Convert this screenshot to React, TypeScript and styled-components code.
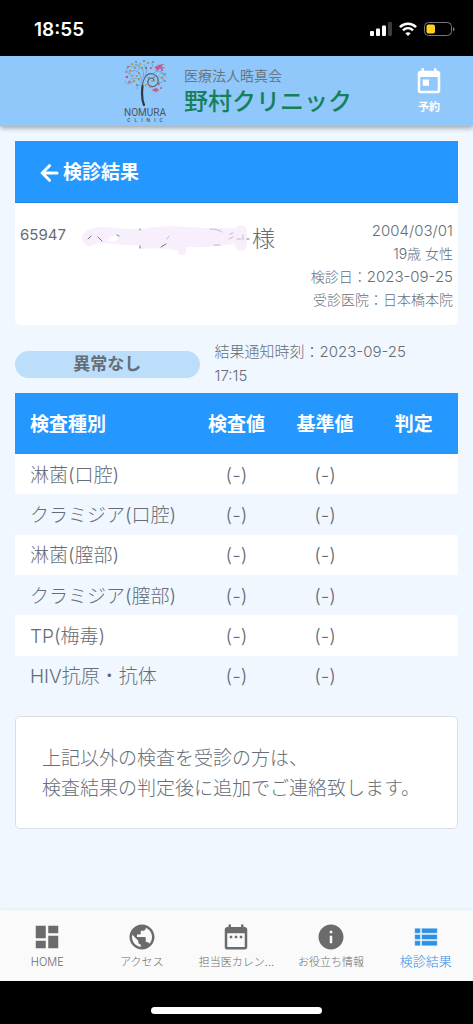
import React from "react";
import styled, { createGlobalStyle } from "styled-components";
import { MdDashboard, MdDateRange, MdInfo, MdPublic, MdToday } from "react-icons/md";

const GlobalStyle = createGlobalStyle`
  *, *::before, *::after { box-sizing: border-box; }
  body {
    margin: 0;
    background: #000;
    color: #656d76;
    font-family: Inter, "Noto Sans CJK JP", sans-serif;
    font-weight: 300;
  }
  h1, p { margin: 0; }
`;

const Screen = styled.div`
  display: flex;
  flex-direction: column;
  min-height: 100vh;
`;

const StatusBar = styled.div`
  display: flex;
  align-items: center;
  justify-content: space-between;
  height: 56px;
  padding: 2px 18px 0 34px;
  background: #000;
  color: #fff;
  font-size: 19px;
  font-weight: 600;
`;

const StatusIcons = styled.div`
  display: flex;
  align-items: center;
  gap: 7px;
`;

const Header = styled.header`
  position: relative;
  display: grid;
  grid-template-columns: 1fr auto 1fr;
  height: 70px;
  background: #90c8fb;
  box-shadow: 0 2px 5px rgba(0, 0, 0, 0.35);
`;

const Brand = styled.a`
  grid-column: 2;
  display: flex;
  gap: 18px;
  padding-left: 3px;
  color: inherit;
  text-decoration: none;
`;

const Emblem = styled.div`
  display: flex;
  flex-direction: column;
  align-items: center;
  width: 42px;
  padding-top: 3px;
  color: #4b5563;
`;

const EmblemName = styled.span`
  margin-top: 2px;
  font-family: Roboto, sans-serif;
  font-size: 10px;
  font-weight: 400;
  line-height: 9px;
`;

const EmblemKind = styled.span`
  font-family: Roboto, sans-serif;
  font-size: 5px;
  font-weight: 500;
  line-height: 7px;
  letter-spacing: 4px;
  padding-left: 4px;
`;

const BrandText = styled.div`
  display: flex;
  flex-direction: column;
  padding-top: 10px;
`;

const Corporation = styled.span`
  color: #6a7683;
  font-size: 14px;
  font-weight: 400;
  line-height: 20px;
`;

const ClinicName = styled.span`
  color: #16805a;
  font-size: 24px;
  font-weight: 500;
  line-height: 32px;
`;

const ReserveButton = styled.button`
  grid-column: 3;
  justify-self: end;
  display: flex;
  flex-direction: column;
  align-items: center;
  margin-right: 14px;
  padding: 11px 0 0;
  width: 60px;
  border: 0;
  background: none;
  color: #fff;
  font: inherit;
  font-size: 11px;
  font-weight: 700;
  line-height: 20px;
  white-space: nowrap;
`;

const Content = styled.main`
  flex: 1;
  padding: 15px 15px 0;
  background: #f0f7ff;
`;

const Card = styled.section`
  overflow: hidden;
  border-radius: 0 0 5px 5px;
  background: #fff;
`;

const CardHeader = styled.div`
  display: flex;
  align-items: center;
  gap: 4px;
  margin: 0 0 16px;
  height: 62px;
  padding: 2px 25px 0;
  border-bottom: 1px solid #1f86e4;
  background: #2598ff;
  color: #fff;
`;

const BackButton = styled.button`
  display: flex;
  padding: 0;
  border: 0;
  background: none;
  color: inherit;
`;

const Title = styled.h1`
  font-size: 19px;
  font-weight: 700;
  line-height: 28px;
`;

const Patient = styled.div`
  display: flex;
  justify-content: space-between;
  padding: 0 5px 14px;
`;

const PatientId = styled.span`
  padding-top: 5px;
  font-size: 15px;
  font-weight: 400;
  line-height: 22px;
`;

const PatientName = styled.div`
  display: flex;
  align-items: flex-start;
  margin-left: 14px;
  font-size: 23px;
  line-height: 40px;
`;

const Details = styled.div`
  flex: 1;
  margin-left: -40px;
  text-align: right;
  font-size: 14px;
  line-height: 23px;
`;

const BirthDate = styled.p`
  font-size: 15px;
`;

const ExamDate = styled.time`
  font-size: 15px;
`;

const Summary = styled.div`
  display: grid;
  grid-template-columns: 5fr 7fr;
  align-items: center;
  padding: 15px 0 5px;
`;

const Verdict = styled.strong`
  height: 27px;
  border-radius: 14px;
  background: #bcdefb;
  text-align: center;
  font-size: 17px;
  font-weight: 700;
  line-height: 26px;
`;

const NotifiedAt = styled.p`
  padding: 0 20px 0 15px;
  font-size: 15px;
  line-height: 24px;
`;

const Results = styled.table`
  width: 100%;
  height: 303px;
  table-layout: fixed;
  border-collapse: collapse;
  font-size: 19px;
`;

const HeadCell = styled.th<{ $first?: boolean }>`
  width: ${(p) => (p.$first ? "40%" : "20%")};
  height: 61px;
  padding: ${(p) => (p.$first ? "3px 0 0 15px" : "3px 0 0")};
  background: #2598ff;
  color: #fff;
  text-align: ${(p) => (p.$first ? "left" : "center")};
  font-weight: 700;
  line-height: 28px;
`;

const Row = styled.tr`
  &:nth-child(odd) { background: #fff; }
`;

const NameCell = styled.th`
  padding: 3px 0 0 15px;
  text-align: left;
  font-weight: 300;
  line-height: 28px;
  white-space: nowrap;
`;

const ValueCell = styled.td`
  padding: 3px 0 0;
  text-align: center;
  line-height: 28px;
`;

const Note = styled.p`
  margin-top: 20px;
  padding: 27px 26px 24px;
  border: 1px solid #dcdfe4;
  border-radius: 5px;
  background: #fff;
  font-size: 19px;
  line-height: 30px;
`;

const TabBar = styled.nav`
  display: grid;
  grid-template-columns: repeat(5, 1fr);
  height: 71px;
  background: #fafafa;
  box-shadow: 0 -1px 3px rgba(0, 0, 0, 0.05);
`;

const Tab = styled.a<{ $active?: boolean }>`
  display: flex;
  flex-direction: column;
  align-items: center;
  padding-top: 12px;
  color: ${(p) => (p.$active ? "#2b90e6" : "#6b6b6b")};
  font-size: ${(p) => (p.$active ? "13px" : "11px")};
  line-height: ${(p) => (p.$active ? "18px" : "20px")};
  text-decoration: none;
  white-space: nowrap;
`;

const HomeArea = styled.div`
  display: flex;
  justify-content: center;
  height: 43px;
  padding-top: 26px;
  background: #000;
`;

const HomeIndicator = styled.div`
  width: 36%;
  height: 7px;
  border-radius: 4px;
  background: #fff;
`;

function Signal() {
  return (
    <svg width="22" height="14" viewBox="0 0 22 14" fill="#fff" aria-hidden="true">
      <rect x="0" y="9" width="4" height="5" rx="1" />
      <rect x="6" y="6.500" width="4" height="7.500" rx="1" />
      <rect x="12" y="3.500" width="4" height="10.500" rx="1" />
      <rect x="18" y="0" width="4" height="14" rx="1" fill="#3c3c3e" />
    </svg>
  );
}

function Wifi() {
  return (
    <svg width="18" height="14" viewBox="0 0 18 14" fill="none" stroke="#fff" strokeWidth="2.500" aria-hidden="true">
      <path d="M.9 5.100C5.500.6 12.500.6 17.100 5.100" />
      <path d="M4 8.300c2.900-2.700 7.100-2.700 10 0" />
      <path d="M9 14 6.300 11.200c1.500-1.300 3.900-1.300 5.400 0z" fill="#fff" stroke="none" />
    </svg>
  );
}

function Battery() {
  return (
    <svg width="31" height="14" viewBox="0 0 31 14" aria-hidden="true">
      <rect x=".5" y=".5" width="27" height="13" rx="4" fill="none" stroke="#77777a" />
      <rect x="2.500" y="2.500" width="8.500" height="9" rx="2" fill="#ffd21f" />
      <path d="M29 5v4.500q1.500-.5 1.500-2.200T29 5z" fill="#77777a" />
    </svg>
  );
}

function BackArrow() {
  return (
    <svg width="19" height="18" viewBox="0 0 19 18" fill="none" stroke="#fff" strokeWidth="3" strokeLinecap="round" strokeLinejoin="round" aria-hidden="true">
      <path d="M9.500 1.700 2.200 9l7.300 7.300M2.500 9H17" />
    </svg>
  );
}

const leaves: [number, number, number, string][] = [
  [4, 8, 1, "#b6508b"], [8, 5, 1.3, "#a3a84d"], [12, 3, 0.9, "#5f7a9d"], [16, 5, 1.2, "#cf9a58"],
  [20, 2, 1, "#6b7a8c"], [24, 4, 1.2, "#91a062"], [29, 3, 0.9, "#577899"], [2, 13, 0.8, "#687c91"],
  [6, 12, 1.2, "#cc8c51"], [11, 9, 1, "#7692a6"], [3, 18, 1.3, "#c94e8a"], [8, 17, 1, "#9aa05a"],
  [5, 23, 1.2, "#d9698d"], [10, 22, 1.3, "#b09a48"], [13, 26, 1, "#688096"], [15, 14, 1.1, "#c27494"],
  [18, 9, 1, "#8a8d61"], [22, 9, 1.2, "#658099"], [27, 9, 1, "#c9518f"], [38, 11, 1.1, "#bd4e87"],
  [41, 15, 0.9, "#7d8f72"], [38, 19, 1.2, "#b4985a"], [41, 22, 0.9, "#6d8298"], [35, 25, 1.2, "#9a8d58"],
  [25, 19, 1.2, "#5da18d"], [28, 22, 1, "#a2a34f"], [30, 18, 0.9, "#4e97a1"], [22, 26, 1.3, "#cfa04a"],
  [26, 28, 1.1, "#d27293"], [37, 29, 1, "#ba5a83"], [15, 20, 1.1, "#d18249"], [13, 17, 0.8, "#607b95"],
];

function Tree() {
  return (
    <svg width="42" height="47" viewBox="0 0 42 47" fill="none" strokeLinecap="round" aria-hidden="true">
      <g stroke="#6d8297" strokeWidth=".5">
        <path d="M18 25C15 20 12 18 8 20s-2 5 1 3M18 22C17 15 13 10 8 12s-2 6 2 4M19 19C21 13 18 8 14 6s-5 2-2 3M21 17C24 12 23 7 20 6M28 15c5-4 9-4 11 0s-4 5-4 2M34 23c4 2 7-1 5-4M19 26c-4-1-7 2-6 4" />
        <path d="M5 15C0 10 4 5 9 8M1 22c2 5 6 3 6 1M13 12c4-2 2-7-1-5M26 10c3-1 4-5 1-6M36 14c4-1 6 2 5 4" />
      </g>
      <path d="M18.500 34C17 20 23 13 29 15s7 9 2 12c-4 2-8-1-7-5s6-4 6 0" stroke="#58636f" strokeWidth="1.200" />
      <path d="M20 46C17 39 18 32 18.500 27" stroke="#303740" strokeWidth="2.200" />
      {leaves.map(([x, y, r, color]) => (
        <circle key={`${x}-${y}`} cx={x} cy={y} r={r} fill={color} />
      ))}
      <path d="m31 8 4-2 5-1-3 3 4 1-6 1-2 2zM28 31l4-2 3 2-3 2zM33 5l3 3" fill="#c9578f" stroke="#c9578f" strokeWidth=".3" />
    </svg>
  );
}

function RedactedName() {
  return (
    <svg width="172" height="36" viewBox="0 0 172 36" fill="none" strokeLinecap="round" role="img" aria-label="非表示の氏名">
      <path d="M10 19C24 11 42 22 68 17S118 19 158 17" stroke="#f8effd" strokeWidth="16" />
      <path d="M11 20Q42 9 76 19T158 20M62 26q20-2 40 2v5" stroke="#f8effd" strokeWidth="8" />
      <path d="M161 12v14" stroke="#f8effd" strokeWidth="12" />
      <path d="M29 19c4-4 9-3 9 0s-7 5-10 3z" fill="#fff" />
      <g stroke="#777781" strokeWidth="1">
        <path d="m8 20 3-3M18 18l4 4M37 16l2 1M60 10v1M60 27v2M81 28l5-3" />
        <path d="M87 20l2-3M130 10q8 0 12 3M134 26h6M150 15l3-1M149 20l4-2M157 20h4M163 16v5" stroke="#c5b9cb" />
        <path d="M167 20h2" />
      </g>
    </svg>
  );
}

function ListIcon() {
  return (
    <svg width="30" height="30" viewBox="0 0 24 24" fill="currentColor" aria-hidden="true">
      <path d="M3 14h4.500v-4H3zm0 5h4.500v-4H3zM3 9h4.500V5H3zm5.500 5H21v-4H8.500zm0 5H21v-4H8.500zM8.500 5v4H21V5z" stroke="#fafafa" strokeWidth=".3" />
    </svg>
  );
}

const results = ["淋菌(口腔)", "クラミジア(口腔)", "淋菌(膣部)", "クラミジア(膣部)", "TP(梅毒)", "HIV抗原・抗体"];

const tabs = [
  { label: "HOME", icon: <MdDashboard size={30} /> },
  { label: "アクセス", icon: <MdPublic size={30} /> },
  { label: "担当医カレン...", icon: <MdDateRange size={30} /> },
  { label: "お役立ち情報", icon: <MdInfo size={30} /> },
  { label: "検診結果", icon: <ListIcon />, active: true },
];

export default function App() {
  return (
    <Screen>
      <GlobalStyle />
      <StatusBar>
        <span>18:55</span>
        <StatusIcons>
          <Signal />
          <Wifi />
          <Battery />
        </StatusIcons>
      </StatusBar>
      <Header>
        <Brand href="#home">
          <Emblem>
            <Tree />
            <EmblemName>NOMURA</EmblemName>
            <EmblemKind>CLINIC</EmblemKind>
          </Emblem>
          <BrandText>
            <Corporation>医療法人晧真会</Corporation>
            <ClinicName>野村クリニック</ClinicName>
          </BrandText>
        </Brand>
        <ReserveButton type="button">
          <MdToday size={30} />
          予約
        </ReserveButton>
      </Header>
      <Content>
        <Card>
          <CardHeader>
            <BackButton type="button" aria-label="戻る">
              <BackArrow />
            </BackButton>
            <Title>検診結果</Title>
          </CardHeader>
          <Patient>
            <PatientId>65947</PatientId>
            <PatientName>
              <RedactedName />
              様
            </PatientName>
            <Details>
              <BirthDate>2004/03/01</BirthDate>
              <p>19歳 女性</p>
              <p>検診日：<ExamDate>2023-09-25</ExamDate></p>
              <p>受診医院：日本橋本院</p>
            </Details>
          </Patient>
        </Card>
        <Summary>
          <Verdict>異常なし</Verdict>
          <NotifiedAt>結果通知時刻：2023-09-25 17:15</NotifiedAt>
        </Summary>
        <Results>
          <thead>
            <tr>
              <HeadCell $first scope="col">検査種別</HeadCell>
              <HeadCell scope="col">検査値</HeadCell>
              <HeadCell scope="col">基準値</HeadCell>
              <HeadCell scope="col">判定</HeadCell>
            </tr>
          </thead>
          <tbody>
            {results.map((name) => (
              <Row key={name}>
                <NameCell scope="row">{name}</NameCell>
                <ValueCell>(-)</ValueCell>
                <ValueCell>(-)</ValueCell>
                <ValueCell />
              </Row>
            ))}
          </tbody>
        </Results>
        <Note>
          上記以外の検査を受診の方は、
          <br />
          検査結果の判定後に追加でご連絡致します。
        </Note>
      </Content>
      <TabBar>
        {tabs.map((tab) => (
          <Tab key={tab.label} href="#" $active={tab.active} aria-current={tab.active ? "page" : undefined}>
            {tab.icon}
            {tab.label}
          </Tab>
        ))}
      </TabBar>
      <HomeArea>
        <HomeIndicator />
      </HomeArea>
    </Screen>
  );
}
